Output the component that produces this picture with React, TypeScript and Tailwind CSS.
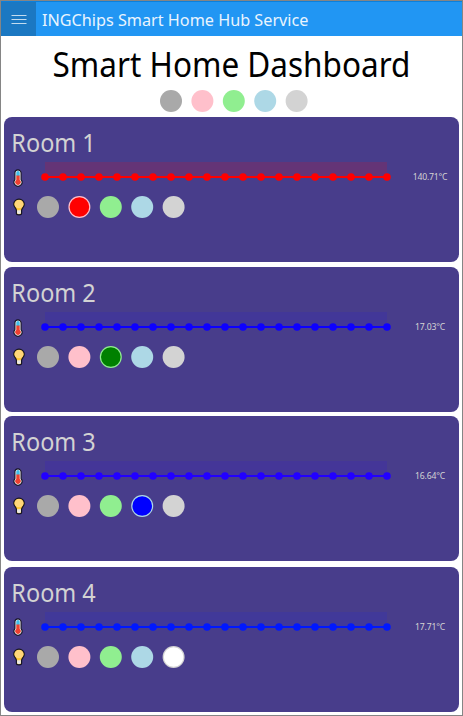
const palette = ["#a9a9a9", "#ffc0cb", "#90ee90", "#add8e6", "#d3d3d3"];

type Room = { name: string; temp: string; line: string; band: string; lit: number; glow: string; gap: string };

const rooms: Room[] = [
  { name: "Room 1", temp: "140.71°C", line: "#ff0000", band: "#643476", lit: 1, glow: "#ff0000", gap: "mt-0" },
  { name: "Room 2", temp: "17.03°C", line: "#0d00ff", band: "#423798", lit: 2, glow: "#008000", gap: "mt-[5px]" },
  { name: "Room 3", temp: "16.64°C", line: "#2200ff", band: "#443698", lit: 3, glow: "#0000ff", gap: "mt-[4.4px]" },
  { name: "Room 4", temp: "17.71°C", line: "#0018ff", band: "#413999", lit: 4, glow: "#ffffff", gap: "mt-[5.2px]" },
];

function Swatches({ lit = -1, glow = "" }: { lit?: number; glow?: string }) {
  return (
    <svg className="h-[22px] w-[148px] shrink-0" viewBox="0 0 148 22">
      {palette.map((color, i) => (
        <g key={color}>
          <circle cx={11 + i * 31.4} cy="11" r="11" fill={color} />
          {i === lit && <circle cx={11 + i * 31.4} cy="11" r="9.8" fill={glow} />}
        </g>
      ))}
    </svg>
  );
}

function Thermometer() {
  return (
    <svg className="h-[18px] w-[10px] shrink-0" viewBox="0 0 10 18">
      <path d="M1.9 4a3.1 3.1 0 0 1 6.2 0v6.6a4 4 0 1 1-6.2 0z" fill="#f4f4f4" stroke="#161525" strokeWidth="1.1" />
      <path d="M3.3 3.8a1.7 1.7 0 0 1 3.4 0V7H3.3z" fill="#41bfe9" />
      <path d="M3.3 6.5h3.4v4.6a2.7 2.7 0 1 1-3.4 0z" fill="#ef4030" />
    </svg>
  );
}

function Bulb() {
  return (
    <svg className="h-[18px] w-[12px] shrink-0" viewBox="0 0 12 18">
      <path
        d="M6 1.2a5.1 5.1 0 0 0-5.3 5c0 2.6 2.2 3.7 2.7 5.9v3.1Q3.4 16.8 6 16.8t2.6-1.6v-3.1c.5-2.2 2.7-3.3 2.7-5.9a5.1 5.1 0 0 0-5.3-5z"
        fill="#ffc83d"
        stroke="#161525"
        strokeWidth="1.2"
      />
      <path d="M6 2a4.3 4.3 0 0 0-4.4 4.2q0 2 2.3 3.8h4.2q2.3-1.8 2.3-3.8A4.3 4.3 0 0 0 6 2z" fill="#ffd67a" />
      <path d="M4.1 12.2h3.8v2.6q0 1.3-1.9 1.3t-1.9-1.3z" fill="#e8e8e8" />
    </svg>
  );
}

function Chart({ line, band }: { line: string; band: string }) {
  return (
    <svg className="h-[20px] w-[352px] shrink-0" viewBox="0 0 352 20">
      <rect x="5" y="0" width="342" height="15" fill={band} />
      <path d="M5 15H347" stroke={line} strokeWidth="2.2" />
      {Array.from({ length: 20 }, (_, i) => (
        <circle key={i} cx={5 + i * 18} cy="15" r="3.8" fill={line} />
      ))}
    </svg>
  );
}

function RoomCard({ room }: { room: Room }) {
  return (
    <section className={`h-[145px] shrink-0 rounded-[8px] bg-[#483d8b] text-[#d3d3d3] ${room.gap}`}>
      <h2 className="h-[45px] origin-left scale-x-[0.92] pt-[8px] pl-[8px] text-[25.5px] leading-[34px] font-normal whitespace-nowrap">{room.name}</h2>
      <div className="flex h-[20px] items-start pl-[8.7px]">
        <div className="pt-[6.5px]"><Thermometer /></div>
        <div className="pl-[17px]"><Chart line={room.line} band={room.band} /></div>
        <div className="flex-1 scale-x-[0.93] pt-[8px] pl-[10px] text-center text-[9.3px] leading-[14px] tracking-[-0.2px] whitespace-nowrap">{room.temp}</div>
      </div>
      <div className="flex items-center pt-[14px] pl-[8.7px]">
        <Bulb />
        <div className="flex pl-[12px]"><Swatches lit={room.lit} glow={room.glow} /></div>
      </div>
    </section>
  );
}

export default function App() {
  return (
    <main className="flex h-[716px] w-[463px] flex-col overflow-hidden border border-[#858585] bg-white font-['Noto_Sans','Open_Sans',sans-serif]">
      <header className="flex h-[35px] shrink-0 items-center border-t border-[#0b80dc] bg-[#2196f3]">
        <div className="flex h-full w-[35px] items-center justify-center bg-[#1b78c2]">
          <svg className="h-[10px] w-[16px]" viewBox="0 0 16 10" stroke="#c3dcef" strokeWidth="1">
            <path d="M0.5 1.5H15.5M0.5 5.5H15.5M0.5 9.5H15.5" />
          </svg>
        </div>
        <span className="ml-[5.6px] origin-left scale-x-[0.953] pt-[1px] text-[17px] leading-[24px] whitespace-nowrap text-[#e9f4fe]">INGChips Smart Home Hub Service</span>
      </header>
      <h1 className="h-[54px] shrink-0 scale-x-[0.9] pt-[4px] text-center text-[35px] leading-[48px] font-normal whitespace-nowrap text-black">Smart Home Dashboard</h1>
      <div className="flex h-[27px] shrink-0 justify-center pl-[5px]"><Swatches /></div>
      <div className="flex flex-col px-[3.3px]">
        {rooms.map((room) => <RoomCard key={room.name} room={room} />)}
      </div>
    </main>
  );
}
